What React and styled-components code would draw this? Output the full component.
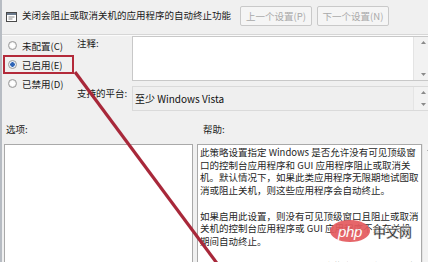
import React from 'react';
import styled, { createGlobalStyle } from 'styled-components';

const GlobalStyle = createGlobalStyle`
  html, body {
    margin: 0;
    padding: 0;
    background: #f0f0f0;
  }
  body {
    font-family: "Noto Sans CJK SC", "Noto Sans", sans-serif;
  }
`;

const Window = styled.div`
  position: relative;
  width: 428px;
  height: 262px;
  overflow: hidden;
  box-sizing: border-box;
  background: #f0f0f0;
  border-left: 2px solid #b7bcc3;
  display: flex;
  flex-direction: column;
  color: #1a1a1a;
  font-size: 9.5px;
`;

const TitleBar = styled.div`
  flex: 0 0 35px;
  box-sizing: border-box;
  display: flex;
  align-items: center;
  padding-left: 4px;
  border-bottom: 1px solid #d6d6d6;
  box-shadow: 0 1px 0 #fbfbfb;
`;

const Title = styled.div`
  margin-left: 5px;
  font-size: 9.5px;
  line-height: 12px;
  white-space: nowrap;
  margin-top: -4px;
`;

const NavButtons = styled.div`
  display: flex;
  gap: 5px;
  margin-left: auto;
  margin-right: 39px;
  margin-top: -3px;
`;

const NavButton = styled.div`
  width: 72px;
  height: 20px;
  box-sizing: border-box;
  display: flex;
  align-items: center;
  justify-content: center;
  border: 1px solid #c9c9c9;
  border-radius: 2px;
  background: #f5f5f5;
  color: #a9a9a9;
  font-size: 9.5px;
`;

const Top = styled.div`
  flex: 0 0 77px;
  display: flex;
  padding-top: 1px;
  box-sizing: border-box;
`;

const RadioGroup = styled.div`
  display: flex;
  flex-direction: column;
  margin-left: 1px;
  width: 71px;
`;

const RadioItem = styled.div`
  height: 19px;
  box-sizing: border-box;
  display: flex;
  align-items: center;
  gap: 5px;
  padding-left: 3px;
  border: 2px solid ${(p) => (p.$marked ? '#b32a3a' : 'transparent')};
  white-space: nowrap;
`;

const RadioDot = styled.span`
  width: 9px;
  height: 9px;
  box-sizing: border-box;
  border-radius: 50%;
  border: 1px solid #9c9c9c;
  background: ${(p) =>
    p.$on
      ? 'radial-gradient(circle, #2d63b5 0 2px, #e6eef8 2.5px)'
      : 'radial-gradient(circle, #ffffff 0 2px, #dcdcdc 4px)'};
`;

const Fields = styled.div`
  flex: 1;
  display: grid;
  grid-template-columns: 58px 1fr;
  grid-template-rows: 45px 25px;
  row-gap: 5px;
`;

const FieldLabel = styled.div`
  padding-left: 3px;
  padding-top: ${(p) => p.$top || 0}px;
  line-height: 12px;
  white-space: nowrap;
`;

const FieldBox = styled.div`
  display: flex;
  box-sizing: border-box;
  border: 1px solid ${(p) => (p.$white ? '#c8c8c8' : '#dadada')};
  border-right: none;
  background: ${(p) => (p.$white ? '#ffffff' : '#efefef')};
`;

const FieldText = styled.div`
  flex: 1;
  padding: 6px 2px;
  font-size: 10px;
  line-height: 12px;
  color: #111;
`;

const ScrollBar = styled.div`
  flex: 0 0 ${(p) => p.$w || 14}px;
  display: flex;
  flex-direction: column;
  justify-content: space-between;
  align-items: center;
  padding: 4px 0 4px 4px;
  box-sizing: border-box;
  background: #f2f2f2;
  border-left: 1px solid #e4e4e4;
`;

const LabelRow = styled.div`
  flex: 0 0 32px;
  display: flex;
  align-items: flex-end;
  padding-bottom: 9px;
  box-sizing: border-box;
`;

const SectionLabel = styled.div`
  width: ${(p) => p.$w}px;
  padding-left: 4px;
  line-height: 12px;
`;

const Panels = styled.div`
  flex: 1 1 0;
  min-height: 0;
  display: grid;
  grid-template-columns: 189px 1fr;
  column-gap: 4px;
  padding-left: 2px;
`;

const OptionsBox = styled.div`
  background: #fff;
  border: 1px solid #a9a9a9;
  border-bottom: none;
`;

const HelpWrap = styled.div`
  display: flex;
  min-height: 0;
`;

const HelpBox = styled.div`
  flex: 1;
  overflow: hidden;
  background: #fff;
  border: 1px solid #a9a9a9;
  border-bottom: none;
  padding: 1px 2px;
  font-size: 9.5px;
  line-height: 12.7px;
  color: #1f1f1f;
`;

const Para = styled.div`
  margin-bottom: 12.7px;
`;

const Line = styled.div`
  white-space: nowrap;
`;

const Arrow = styled.svg`
  position: absolute;
  left: 0;
  top: 0;
  pointer-events: none;
`;

const Watermark = styled.div`
  position: absolute;
  left: 328px;
  top: 220px;
  display: flex;
  align-items: center;
`;

const PhpBadge = styled.div`
  width: 40px;
  height: 22px;
  border-radius: 50%;
  background: #e45a5e;
  color: #fff;
  display: flex;
  align-items: center;
  justify-content: center;
  font-family: "Liberation Sans", Arial, sans-serif;
  font-style: italic;
  font-size: 15px;
  letter-spacing: -0.3px;
  opacity: 0.92;
`;

const PhpText = styled.div`
  margin-left: 3px;
  font-size: 13px;
  font-weight: bold;
  color: #3a3a3a;
  -webkit-text-stroke: 0.3px #fff;
  text-shadow: 0 0 2px #fff;
`;

const Tri = ({ up }) => (
  <svg width="5" height="3" viewBox="0 0 5 3">
    <path d={up ? 'M0 3 L2.5 0 L5 3 Z' : 'M0 0 L2.5 3 L5 0 Z'} fill="#8a8a8a" />
  </svg>
);

const PolicyIcon = () => (
  <svg width="11" height="10" viewBox="0 0 11 10">
    <rect x="0.5" y="0.5" width="10" height="9" fill="#fff" stroke="#4a4a4a" />
    <rect x="1" y="1" width="9" height="2" fill="#6b7a8c" />
    <rect x="2.5" y="4.5" width="6" height="1" fill="#8a8a8a" />
    <rect x="2.5" y="6.5" width="4" height="1" fill="#8a8a8a" />
  </svg>
);

export default function App() {
  return (
    <>
      <GlobalStyle />
      <Window>
        <TitleBar>
          <PolicyIcon />
          <Title>关闭会阻止或取消关机的应用程序的自动终止功能</Title>
          <NavButtons>
            <NavButton>上一个设置(P)</NavButton>
            <NavButton>下一个设置(N)</NavButton>
          </NavButtons>
        </TitleBar>

        <Top>
          <RadioGroup>
            <RadioItem>
              <RadioDot />
              未配置(C)
            </RadioItem>
            <RadioItem $marked>
              <RadioDot $on />
              已启用(E)
            </RadioItem>
            <RadioItem>
              <RadioDot />
              已禁用(D)
            </RadioItem>
          </RadioGroup>
          <Fields>
            <FieldLabel $top={1}>注释:</FieldLabel>
            <FieldBox $white>
              <FieldText />
              <ScrollBar $w={15}>
                <Tri up />
                <Tri />
              </ScrollBar>
            </FieldBox>
            <FieldLabel $top={1}>支持的平台:</FieldLabel>
            <FieldBox>
              <FieldText>至少 Windows Vista</FieldText>
              <ScrollBar $w={15}>
                <Tri up />
                <Tri />
              </ScrollBar>
            </FieldBox>
          </Fields>
        </Top>

        <LabelRow>
          <SectionLabel $w={193}>选项:</SectionLabel>
          <SectionLabel $w={120}>帮助:</SectionLabel>
        </LabelRow>

        <Panels>
          <OptionsBox />
          <HelpWrap>
            <HelpBox>
              <Para>
                <Line>此策略设置指定 Windows 是否允许没有可见顶级窗</Line>
                <Line>口的控制台应用程序和 GUI 应用程序阻止或取消关</Line>
                <Line>机。默认情况下，如果此类应用程序无限期地试图取</Line>
                <Line>消或阻止关机，则这些应用程序会自动终止。</Line>
              </Para>
              <Para>
                <Line>如果启用此设置，则没有可见顶级窗口且阻止或取消</Line>
                <Line>关机的控制台应用程序或 GUI 应用程序不会在关机</Line>
                <Line>期间自动终止。</Line>
              </Para>
              <Para>
                <Line>如果禁用或未配置此设置，则这些应用程序将在关机</Line>
              </Para>
            </HelpBox>
            <ScrollBar $w={6}>
              <Tri up />
            </ScrollBar>
          </HelpWrap>
        </Panels>

        <Arrow width="428" height="262" viewBox="0 0 428 262">
          <line x1="73" y1="72" x2="217" y2="266" stroke="#a8283a" strokeWidth="3.2" />
        </Arrow>

        <Watermark>
          <PhpBadge>php</PhpBadge>
          <PhpText>中文网</PhpText>
        </Watermark>
      </Window>
    </>
  );
}
